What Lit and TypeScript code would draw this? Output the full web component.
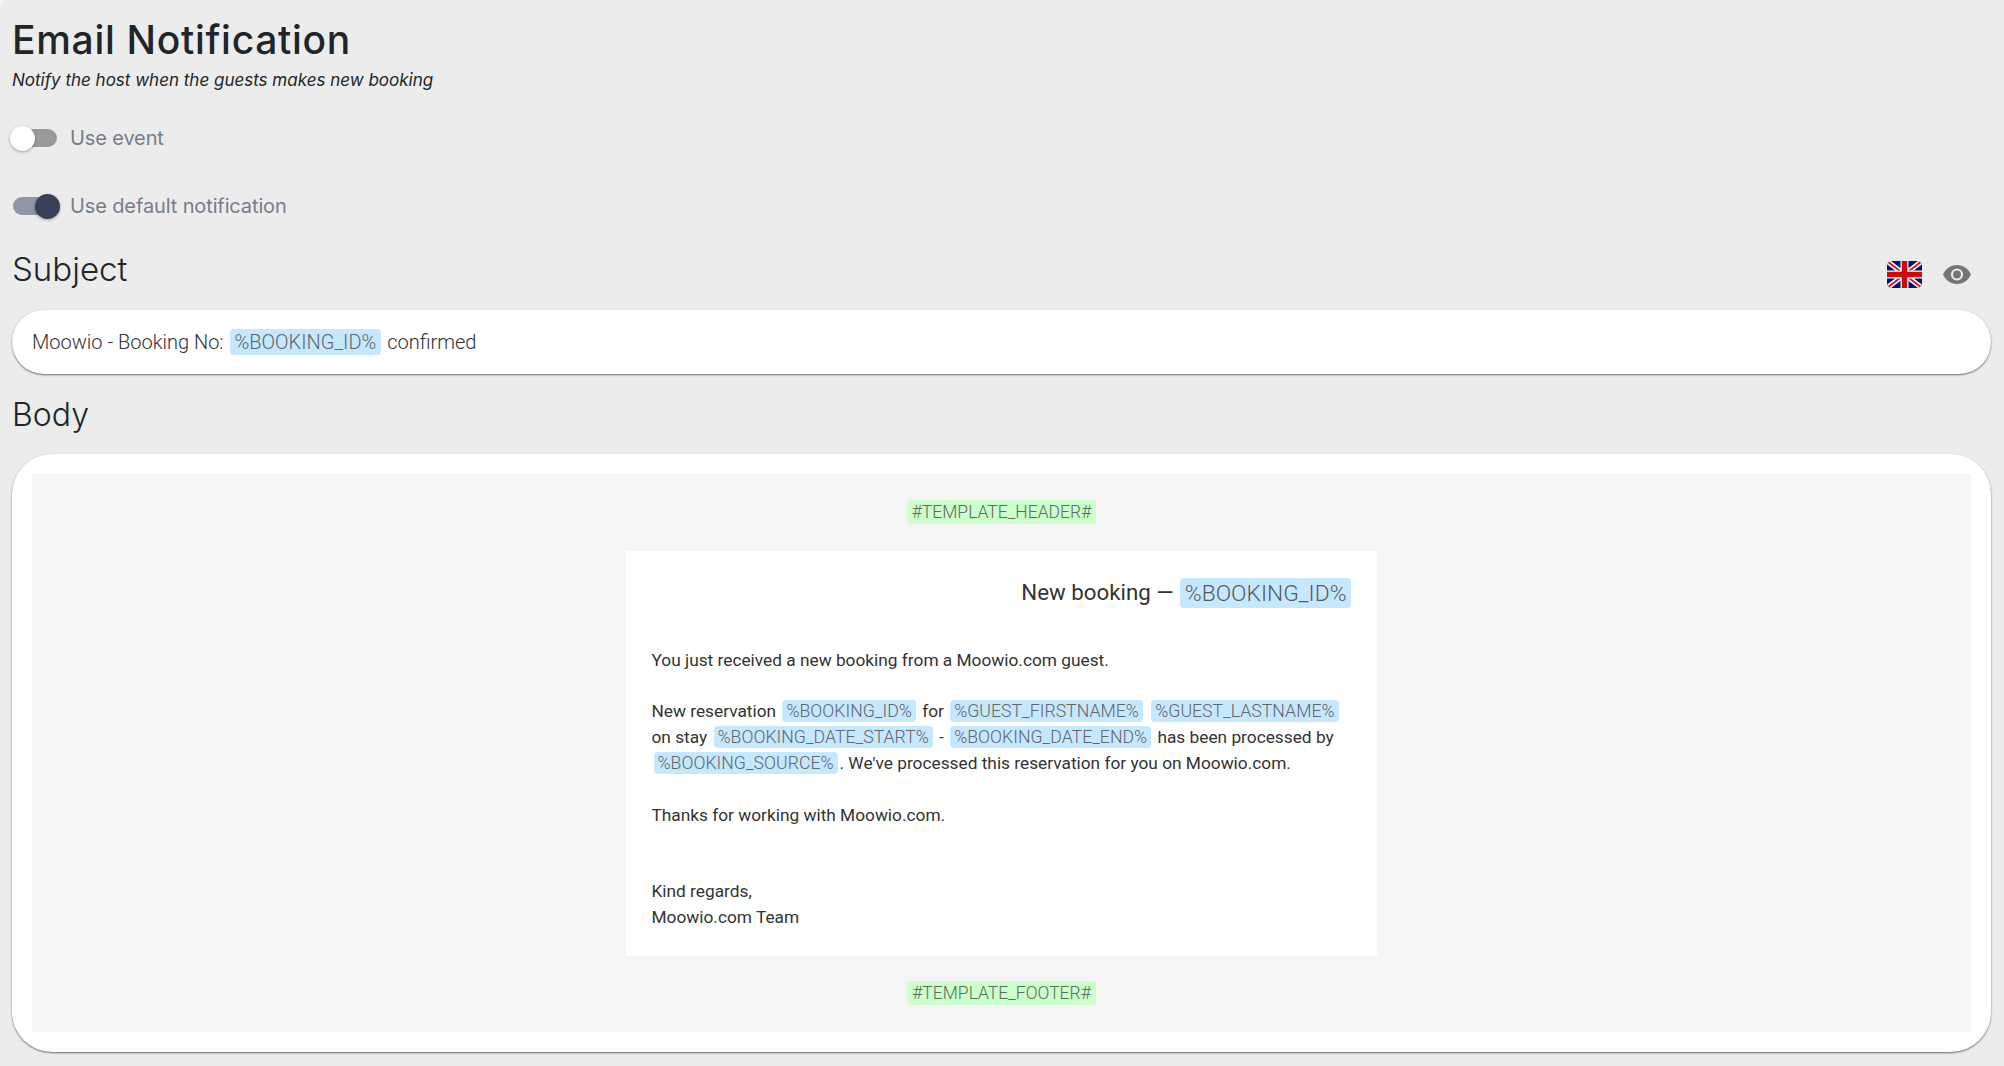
import { LitElement, html, css } from "lit";
import { customElement } from "lit/decorators.js";

@customElement("app-root")
export class AppRoot extends LitElement {
  static styles = css`
    :host { display: block; height: 1066px; overflow: hidden; background: #f7f7f7; font-family: Inter, "Open Sans", sans-serif; color: #212529; }
    .page { height: 100%; box-sizing: border-box; padding: 0 13px 0 12px; background: #ececec; border-top-left-radius: 8px; }
    h1 { margin: 0; padding-top: 17px; font-size: 39px; line-height: 46px; font-weight: 450; letter-spacing: 0.7px; }
    .sub { font-size: 17px; line-height: 25px; font-style: italic; margin-top: 5px; letter-spacing: 0; }
    .toggle-row { display: flex; align-items: center; height: 30px; gap: 13px; }
    .r1 { margin-top: 30px; }
    .r2 { margin-top: 38px; }
    .track { width: 44px; height: 18px; border-radius: 9px; position: relative; flex: none; }
    .track.off { background: #9a9a9a; margin-left: 1px; }
    .track.on { background: #8e95a3; margin-left: 1px; }
    .thumb { position: absolute; top: -3.5px; width: 25px; height: 25px; border-radius: 50%; box-shadow: 0 1px 3px rgba(0,0,0,.35); }
    .off .thumb { left: -3px; background: #fff; }
    .on .thumb { right: -3px; background: #384058; }
    .label { font-size: 20px; color: #757d8c; font-weight: 400; letter-spacing: -0.12px; }
    .head { display: flex; align-items: center; justify-content: space-between; height: 44px; margin-top: 27px; }
    h2 { margin: 0 0 2px; font-size: 33px; font-weight: 300; line-height: 44px; font-family: Inter, sans-serif; letter-spacing: 0; }
    .tools { display: flex; align-items: center; gap: 21px; padding-right: 20px; margin-top: 9px; }
    .input { margin-top: 18px; height: 64px; background: #fff; border-radius: 32px; box-shadow: 0 1px 2px rgba(0,0,0,.55); display: flex; align-items: center; padding-left: 20px; font-family: Roboto, sans-serif; font-weight: 300; font-size: 20px; color: #333; white-space: pre; }
    .input .chip { padding: 1px 4.5px; margin: 0 1.5px; }
    .chip { background: #c6e8ff; border-radius: 4px; color: #62666a; padding: 1px 5px; }
    .green { background: #ccffcc; color: #5d6b5d; }
    .body-head { margin-top: 19px; height: 44px; }
    .body-head h2 { font-size: 32px; margin: 0; }
    .card { margin-top: 17px; height: 598px; box-sizing: border-box; background: #fff; border-radius: 40px; box-shadow: 0 1px 2px rgba(0,0,0,.55); padding: 20px; }
    .canvas { background: #f5f5f5; height: 558px; display: flex; flex-direction: column; align-items: center; font-family: Roboto, sans-serif; font-weight: 300; font-size: 17.5px; }
    .tpl { margin-top: 26px; height: 24px; line-height: 24px; padding: 0 5px; }
    .tpl.foot { margin-top: 25px; }
    .mail { margin-top: 27px; width: 751px; height: 405px; box-sizing: border-box; background: #fff; padding: 26px 26px 25px 25.5px; font-size: 17.3px; font-weight: 400; color: #333; line-height: 26px; }
    .title { text-align: right; font-size: 22.3px; line-height: 31px; font-weight: 400; color: #333; }
    .mail .title .chip { color: #55595e; font-size: 22.8px; font-weight: 300; padding: 1.5px 4.5px; margin: 0 0 0 1px; }
    .para { margin: 0; }
    .mail .chip { font-weight: 300; font-size: 17.7px; padding: 1px 4px; margin: 0 2px; }
    .p1 { margin-top: 38.5px; }
    .p2 { margin-top: 25px; }
    .p3 { margin-top: 26px; }
    .p4 { margin-top: 50px; }
  `;

  render() {
    return html`
      <div class="page">
      <h1>Email Notification</h1>
      <div class="sub">Notify the host when the guests makes new booking</div>
      <div class="toggle-row r1"><div class="track off"><div class="thumb"></div></div><span class="label">Use event</span></div>
      <div class="toggle-row r2"><div class="track on"><div class="thumb"></div></div><span class="label">Use default notification</span></div>
      <div class="head">
        <h2>Subject</h2>
        <div class="tools">
          <svg width="35" height="27" viewBox="0 0 35 27">
            <defs><clipPath id="f"><rect width="35" height="27" rx="5"/></clipPath></defs>
            <g clip-path="url(#f)">
              <rect width="35" height="27" fill="#00146e"/>
              <path d="M0 0L35 27M35 0L0 27" stroke="#fff" stroke-width="5"/>
              <path d="M0 0L35 27M35 0L0 27" stroke="#cf142b" stroke-width="1.8"/>
              <path d="M17.5 0V27M0 13.5H35" stroke="#fff" stroke-width="8"/>
              <path d="M17.5 0V27M0 13.5H35" stroke="#cf0a0a" stroke-width="5.5"/>
            </g>
          </svg>
          <svg width="28" height="19" viewBox="1 4.500 22 15"><path fill="#757575" fill-rule="evenodd" d="M12 4.500C7 4.500 2.730 7.610 1 12c1.730 4.390 6 7.500 11 7.500s9.270-3.110 11-7.500c-1.730-4.390-6-7.500-11-7.500zm0 12.300a4.800 4.800 0 1 1 0-9.600 4.800 4.800 0 0 1 0 9.600zm0-7.900a3.100 3.100 0 1 0 0 6.200 3.100 3.100 0 0 0 0-6.200z"/></svg>
        </div>
      </div>
      <div class="input">Moowio - Booking No: <span class="chip">%BOOKING_ID%</span> confirmed</div>
      <div class="head body-head"><h2>Body</h2></div>
      <div class="card">
        <div class="canvas">
          <span class="chip green tpl">#TEMPLATE_HEADER#</span>
          <div class="mail">
            <div class="title">New booking — <span class="chip">%BOOKING_ID%</span></div>
            <p class="para p1">You just received a new booking from a Moowio.com guest.</p>
            <p class="para p2">New reservation <span class="chip">%BOOKING_ID%</span> for <span class="chip">%GUEST_FIRSTNAME%</span> <span class="chip">%GUEST_LASTNAME%</span> on stay <span class="chip">%BOOKING_DATE_START%</span> - <span class="chip">%BOOKING_DATE_END%</span> has been processed by <span class="chip">%BOOKING_SOURCE%</span>. We've processed this reservation for you on Moowio.com.</p>
            <p class="para p3">Thanks for working with Moowio.com.</p>
            <p class="para p4">Kind regards,<br>Moowio.com Team</p>
          </div>
          <span class="chip green tpl foot">#TEMPLATE_FOOTER#</span>
        </div>
      </div>
      </div>
    `;
  }
}
